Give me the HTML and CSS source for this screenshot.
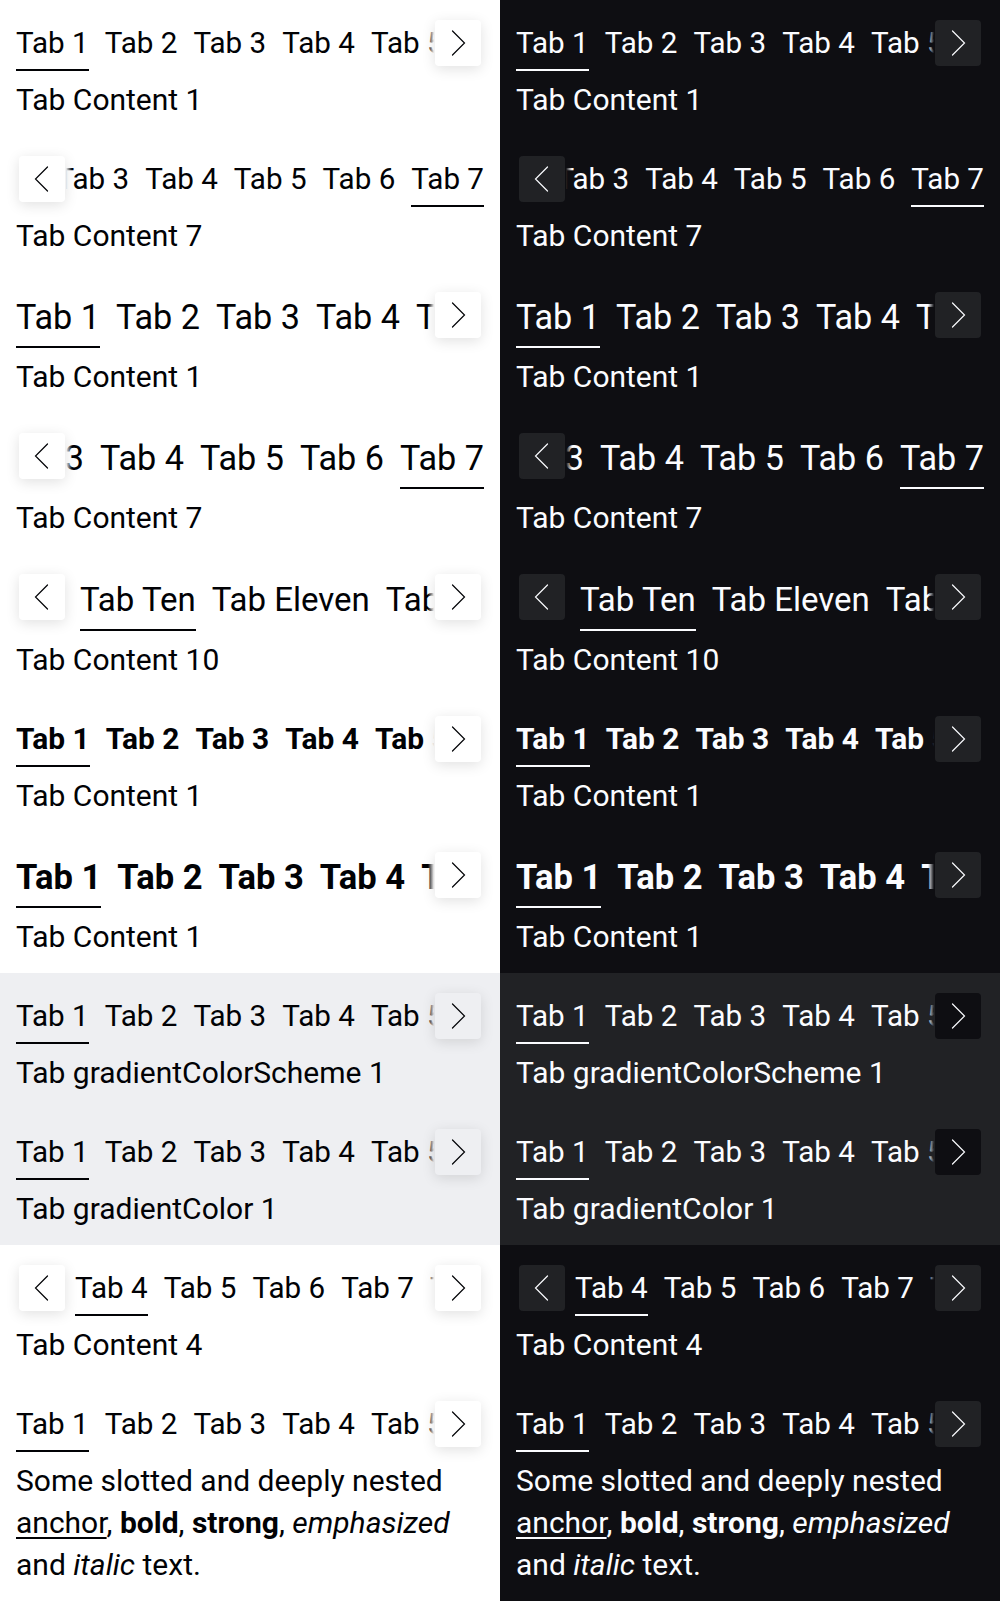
FILE: index.html
```html
<!DOCTYPE html>
<html lang="en">
<head>
<meta charset="utf-8">
<title>Tabs</title>
<link rel="stylesheet" href="styles.css">
</head>
<body>
<main class="page">
  <section class="col light">
    <div class="block">
      <div class="tabs">
        <div class="strip"><button class="tab active">Tab 1</button><button class="tab">Tab 2</button><button class="tab">Tab 3</button><button class="tab">Tab 4</button><button class="tab">Tab 5</button><button class="tab">Tab 6</button><button class="tab">Tab 7</button></div>
        <div class="scroller next"><button class="scroll-btn" aria-label="Next"><svg width="46" height="46" viewBox="0 0 46 46"><path d="M17.5 11 L29.5 23 L17.5 35" /></svg></button></div>
      </div>
      <p class="content">Tab Content 1</p>
    </div>
    <div class="block">
      <div class="tabs">
        <div class="strip end"><button class="tab">Tab 1</button><button class="tab">Tab 2</button><button class="tab">Tab 3</button><button class="tab">Tab 4</button><button class="tab">Tab 5</button><button class="tab">Tab 6</button><button class="tab active">Tab 7</button></div>
        <div class="scroller prev"><button class="scroll-btn" aria-label="Previous"><svg width="46" height="46" viewBox="0 0 46 46"><path d="M28.5 11 L16.5 23 L28.5 35" /></svg></button></div>
      </div>
      <p class="content">Tab Content 7</p>
    </div>
    <div class="block medium">
      <div class="tabs">
        <div class="strip"><button class="tab active">Tab 1</button><button class="tab">Tab 2</button><button class="tab">Tab 3</button><button class="tab">Tab 4</button><button class="tab">Tab 5</button><button class="tab">Tab 6</button><button class="tab">Tab 7</button></div>
        <div class="scroller next"><button class="scroll-btn" aria-label="Next"><svg width="46" height="46" viewBox="0 0 46 46"><path d="M17.5 11 L29.5 23 L17.5 35" /></svg></button></div>
      </div>
      <p class="content">Tab Content 1</p>
    </div>
    <div class="block medium">
      <div class="tabs">
        <div class="strip end"><button class="tab">Tab 1</button><button class="tab">Tab 2</button><button class="tab">Tab 3</button><button class="tab">Tab 4</button><button class="tab">Tab 5</button><button class="tab">Tab 6</button><button class="tab active">Tab 7</button></div>
        <div class="scroller prev"><button class="scroll-btn" aria-label="Previous"><svg width="46" height="46" viewBox="0 0 46 46"><path d="M28.5 11 L16.5 23 L28.5 35" /></svg></button></div>
      </div>
      <p class="content">Tab Content 7</p>
    </div>
    <div class="block medium tall">
      <div class="tabs">
        <div class="strip offset-md"><button class="tab active">Tab Ten</button><button class="tab">Tab Eleven</button><button class="tab">Tab Twelve</button></div>
        <div class="scroller prev"><button class="scroll-btn" aria-label="Previous"><svg width="46" height="46" viewBox="0 0 46 46"><path d="M28.5 11 L16.5 23 L28.5 35" /></svg></button></div>
        <div class="scroller next"><button class="scroll-btn" aria-label="Next"><svg width="46" height="46" viewBox="0 0 46 46"><path d="M17.5 11 L29.5 23 L17.5 35" /></svg></button></div>
      </div>
      <p class="content">Tab Content 10</p>
    </div>
    <div class="block bold">
      <div class="tabs">
        <div class="strip"><button class="tab active">Tab 1</button><button class="tab">Tab 2</button><button class="tab">Tab 3</button><button class="tab">Tab 4</button><button class="tab">Tab 5</button><button class="tab">Tab 6</button><button class="tab">Tab 7</button></div>
        <div class="scroller next"><button class="scroll-btn" aria-label="Next"><svg width="46" height="46" viewBox="0 0 46 46"><path d="M17.5 11 L29.5 23 L17.5 35" /></svg></button></div>
      </div>
      <p class="content">Tab Content 1</p>
    </div>
    <div class="block medium bold">
      <div class="tabs">
        <div class="strip"><button class="tab active">Tab 1</button><button class="tab">Tab 2</button><button class="tab">Tab 3</button><button class="tab">Tab 4</button><button class="tab">Tab 5</button><button class="tab">Tab 6</button><button class="tab">Tab 7</button></div>
        <div class="scroller next"><button class="scroll-btn" aria-label="Next"><svg width="46" height="46" viewBox="0 0 46 46"><path d="M17.5 11 L29.5 23 L17.5 35" /></svg></button></div>
      </div>
      <p class="content">Tab Content 1</p>
    </div>
    <div class="surface">
      <div class="block">
        <div class="tabs">
          <div class="strip"><button class="tab active">Tab 1</button><button class="tab">Tab 2</button><button class="tab">Tab 3</button><button class="tab">Tab 4</button><button class="tab">Tab 5</button><button class="tab">Tab 6</button><button class="tab">Tab 7</button></div>
          <div class="scroller next"><button class="scroll-btn" aria-label="Next"><svg width="46" height="46" viewBox="0 0 46 46"><path d="M17.5 11 L29.5 23 L17.5 35" /></svg></button></div>
        </div>
        <p class="content">Tab gradientColorScheme 1</p>
      </div>
      <div class="block">
        <div class="tabs">
          <div class="strip"><button class="tab active">Tab 1</button><button class="tab">Tab 2</button><button class="tab">Tab 3</button><button class="tab">Tab 4</button><button class="tab">Tab 5</button><button class="tab">Tab 6</button><button class="tab">Tab 7</button></div>
          <div class="scroller next"><button class="scroll-btn" aria-label="Next"><svg width="46" height="46" viewBox="0 0 46 46"><path d="M17.5 11 L29.5 23 L17.5 35" /></svg></button></div>
        </div>
        <p class="content">Tab gradientColor 1</p>
      </div>
    </div>
    <div class="block">
      <div class="tabs">
        <div class="strip offset-sm"><button class="tab active">Tab 4</button><button class="tab">Tab 5</button><button class="tab">Tab 6</button><button class="tab">Tab 7</button><button class="tab">Tab 8</button></div>
        <div class="scroller prev"><button class="scroll-btn" aria-label="Previous"><svg width="46" height="46" viewBox="0 0 46 46"><path d="M28.5 11 L16.5 23 L28.5 35" /></svg></button></div>
        <div class="scroller next"><button class="scroll-btn" aria-label="Next"><svg width="46" height="46" viewBox="0 0 46 46"><path d="M17.5 11 L29.5 23 L17.5 35" /></svg></button></div>
      </div>
      <p class="content">Tab Content 4</p>
    </div>
    <div class="block">
      <div class="tabs">
        <div class="strip"><button class="tab active">Tab 1</button><button class="tab">Tab 2</button><button class="tab">Tab 3</button><button class="tab">Tab 4</button><button class="tab">Tab 5</button><button class="tab">Tab 6</button><button class="tab">Tab 7</button></div>
        <div class="scroller next"><button class="scroll-btn" aria-label="Next"><svg width="46" height="46" viewBox="0 0 46 46"><path d="M17.5 11 L29.5 23 L17.5 35" /></svg></button></div>
      </div>
      <p class="content">Some slotted and deeply nested <a href="#">anchor</a>, <b>bold</b>, <strong>strong</strong>, <em>emphasized</em> and <i>italic</i> text.</p>
    </div>
  </section>

  <section class="col dark">
    <div class="block">
      <div class="tabs">
        <div class="strip"><button class="tab active">Tab 1</button><button class="tab">Tab 2</button><button class="tab">Tab 3</button><button class="tab">Tab 4</button><button class="tab">Tab 5</button><button class="tab">Tab 6</button><button class="tab">Tab 7</button></div>
        <div class="scroller next"><button class="scroll-btn" aria-label="Next"><svg width="46" height="46" viewBox="0 0 46 46"><path d="M17.5 11 L29.5 23 L17.5 35" /></svg></button></div>
      </div>
      <p class="content">Tab Content 1</p>
    </div>
    <div class="block">
      <div class="tabs">
        <div class="strip end"><button class="tab">Tab 1</button><button class="tab">Tab 2</button><button class="tab">Tab 3</button><button class="tab">Tab 4</button><button class="tab">Tab 5</button><button class="tab">Tab 6</button><button class="tab active">Tab 7</button></div>
        <div class="scroller prev"><button class="scroll-btn" aria-label="Previous"><svg width="46" height="46" viewBox="0 0 46 46"><path d="M28.5 11 L16.5 23 L28.5 35" /></svg></button></div>
      </div>
      <p class="content">Tab Content 7</p>
    </div>
    <div class="block medium">
      <div class="tabs">
        <div class="strip"><button class="tab active">Tab 1</button><button class="tab">Tab 2</button><button class="tab">Tab 3</button><button class="tab">Tab 4</button><button class="tab">Tab 5</button><button class="tab">Tab 6</button><button class="tab">Tab 7</button></div>
        <div class="scroller next"><button class="scroll-btn" aria-label="Next"><svg width="46" height="46" viewBox="0 0 46 46"><path d="M17.5 11 L29.5 23 L17.5 35" /></svg></button></div>
      </div>
      <p class="content">Tab Content 1</p>
    </div>
    <div class="block medium">
      <div class="tabs">
        <div class="strip end"><button class="tab">Tab 1</button><button class="tab">Tab 2</button><button class="tab">Tab 3</button><button class="tab">Tab 4</button><button class="tab">Tab 5</button><button class="tab">Tab 6</button><button class="tab active">Tab 7</button></div>
        <div class="scroller prev"><button class="scroll-btn" aria-label="Previous"><svg width="46" height="46" viewBox="0 0 46 46"><path d="M28.5 11 L16.5 23 L28.5 35" /></svg></button></div>
      </div>
      <p class="content">Tab Content 7</p>
    </div>
    <div class="block medium tall">
      <div class="tabs">
        <div class="strip offset-md"><button class="tab active">Tab Ten</button><button class="tab">Tab Eleven</button><button class="tab">Tab Twelve</button></div>
        <div class="scroller prev"><button class="scroll-btn" aria-label="Previous"><svg width="46" height="46" viewBox="0 0 46 46"><path d="M28.5 11 L16.5 23 L28.5 35" /></svg></button></div>
        <div class="scroller next"><button class="scroll-btn" aria-label="Next"><svg width="46" height="46" viewBox="0 0 46 46"><path d="M17.5 11 L29.5 23 L17.5 35" /></svg></button></div>
      </div>
      <p class="content">Tab Content 10</p>
    </div>
    <div class="block bold">
      <div class="tabs">
        <div class="strip"><button class="tab active">Tab 1</button><button class="tab">Tab 2</button><button class="tab">Tab 3</button><button class="tab">Tab 4</button><button class="tab">Tab 5</button><button class="tab">Tab 6</button><button class="tab">Tab 7</button></div>
        <div class="scroller next"><button class="scroll-btn" aria-label="Next"><svg width="46" height="46" viewBox="0 0 46 46"><path d="M17.5 11 L29.5 23 L17.5 35" /></svg></button></div>
      </div>
      <p class="content">Tab Content 1</p>
    </div>
    <div class="block medium bold">
      <div class="tabs">
        <div class="strip"><button class="tab active">Tab 1</button><button class="tab">Tab 2</button><button class="tab">Tab 3</button><button class="tab">Tab 4</button><button class="tab">Tab 5</button><button class="tab">Tab 6</button><button class="tab">Tab 7</button></div>
        <div class="scroller next"><button class="scroll-btn" aria-label="Next"><svg width="46" height="46" viewBox="0 0 46 46"><path d="M17.5 11 L29.5 23 L17.5 35" /></svg></button></div>
      </div>
      <p class="content">Tab Content 1</p>
    </div>
    <div class="surface">
      <div class="block">
        <div class="tabs">
          <div class="strip"><button class="tab active">Tab 1</button><button class="tab">Tab 2</button><button class="tab">Tab 3</button><button class="tab">Tab 4</button><button class="tab">Tab 5</button><button class="tab">Tab 6</button><button class="tab">Tab 7</button></div>
          <div class="scroller next"><button class="scroll-btn" aria-label="Next"><svg width="46" height="46" viewBox="0 0 46 46"><path d="M17.5 11 L29.5 23 L17.5 35" /></svg></button></div>
        </div>
        <p class="content">Tab gradientColorScheme 1</p>
      </div>
      <div class="block">
        <div class="tabs">
          <div class="strip"><button class="tab active">Tab 1</button><button class="tab">Tab 2</button><button class="tab">Tab 3</button><button class="tab">Tab 4</button><button class="tab">Tab 5</button><button class="tab">Tab 6</button><button class="tab">Tab 7</button></div>
          <div class="scroller next"><button class="scroll-btn" aria-label="Next"><svg width="46" height="46" viewBox="0 0 46 46"><path d="M17.5 11 L29.5 23 L17.5 35" /></svg></button></div>
        </div>
        <p class="content">Tab gradientColor 1</p>
      </div>
    </div>
    <div class="block">
      <div class="tabs">
        <div class="strip offset-sm"><button class="tab active">Tab 4</button><button class="tab">Tab 5</button><button class="tab">Tab 6</button><button class="tab">Tab 7</button><button class="tab">Tab 8</button></div>
        <div class="scroller prev"><button class="scroll-btn" aria-label="Previous"><svg width="46" height="46" viewBox="0 0 46 46"><path d="M28.5 11 L16.5 23 L28.5 35" /></svg></button></div>
        <div class="scroller next"><button class="scroll-btn" aria-label="Next"><svg width="46" height="46" viewBox="0 0 46 46"><path d="M17.5 11 L29.5 23 L17.5 35" /></svg></button></div>
      </div>
      <p class="content">Tab Content 4</p>
    </div>
    <div class="block">
      <div class="tabs">
        <div class="strip"><button class="tab active">Tab 1</button><button class="tab">Tab 2</button><button class="tab">Tab 3</button><button class="tab">Tab 4</button><button class="tab">Tab 5</button><button class="tab">Tab 6</button><button class="tab">Tab 7</button></div>
        <div class="scroller next"><button class="scroll-btn" aria-label="Next"><svg width="46" height="46" viewBox="0 0 46 46"><path d="M17.5 11 L29.5 23 L17.5 35" /></svg></button></div>
      </div>
      <p class="content">Some slotted and deeply nested <a href="#">anchor</a>, <b>bold</b>, <strong>strong</strong>, <em>emphasized</em> and <i>italic</i> text.</p>
    </div>
  </section>
</main>
</body>
</html>
```

FILE: styles.css
```css
* { box-sizing: border-box; }

html, body {
  margin: 0;
  padding: 0;
}

body {
  font-family: Roboto, "Liberation Sans", Arial, sans-serif;
  font-weight: 400;
  -webkit-font-smoothing: antialiased;
}

.page {
  display: grid;
  grid-template-columns: 500px 500px;
  min-height: 100vh;
}

.col {
  --bg: #ffffff;
  --btn: #ffffff;
  --shadow: 0 3px 14px rgba(0, 0, 0, 0.12);
  background: var(--bg);
  color: #010205;
  overflow: hidden;
}

.col.dark {
  --bg: #0e0e12;
  --btn: #212225;
  --shadow: none;
  color: #fbfcff;
}

.col.light .surface {
  --bg: #eeeff2;
  --btn: #eeeff2;
  background: var(--bg);
}

.col.dark .surface {
  --bg: #212225;
  --btn: #0e0e12;
  background: var(--bg);
}

.block {
  padding: 20px 16px 15px;
}

.tabs {
  position: relative;
}

.strip {
  display: flex;
  gap: 16px;
  overflow: hidden;
}

.strip.end {
  justify-content: flex-end;
}

.strip.offset-sm {
  padding-left: 59px;
}

.strip.offset-md {
  padding-left: 64px;
}

.tab {
  flex: none;
  margin: 0;
  padding: 0 0 3px;
  border: 0;
  border-bottom: 2px solid transparent;
  background: none;
  color: inherit;
  font-family: inherit;
  font-weight: 400;
  font-size: 29.6px;
  line-height: 46px;
  white-space: nowrap;
  cursor: pointer;
}

.tab.active {
  border-bottom-color: currentColor;
}

.medium .tab {
  font-size: 34.2px;
  line-height: 51px;
}

.medium.tall .tab {
  font-size: 33px;
  line-height: 52px;
}

.bold .tab {
  font-weight: 700;
  font-size: 29.9px;
}

.medium.bold .tab {
  font-size: 34.6px;
}

.scroller {
  position: absolute;
  top: -3px;
  height: 52px;
  width: 56px;
  padding: 3px;
  display: flex;
}

.scroller.next {
  right: 0;
  justify-content: flex-end;
  background: linear-gradient(90deg, rgba(0, 0, 0, 0) 0, var(--bg) 6px);
}

.scroller.prev {
  left: 0;
  justify-content: flex-start;
  background: linear-gradient(270deg, rgba(0, 0, 0, 0) 0, var(--bg) 6px);
}

.scroll-btn {
  width: 46px;
  height: 46px;
  padding: 0;
  border: 0;
  border-radius: 4px;
  background: var(--btn);
  box-shadow: var(--shadow);
  color: inherit;
  display: grid;
  place-items: center;
  cursor: pointer;
}

.scroll-btn svg {
  display: block;
}

.scroll-btn path {
  fill: none;
  stroke: currentColor;
  stroke-width: 1.2;
  stroke-linecap: round;
  stroke-linejoin: miter;
}

.content {
  margin: 8px 0 0;
  font-size: 30px;
  line-height: 42px;
}

.content a {
  color: inherit;
  text-decoration: underline;
  text-decoration-thickness: 2px;
  text-underline-offset: 4px;
}

.content b,
.content strong {
  font-weight: 700;
}
```
